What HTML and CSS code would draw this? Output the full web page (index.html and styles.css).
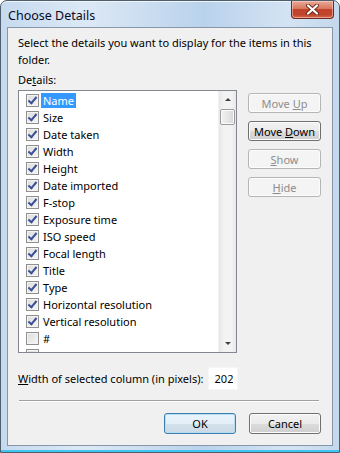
FILE: index.html
```html
<!DOCTYPE html>
<html lang="en">
<head>
    <meta charset="UTF-8">
    <meta name="viewport" content="width=device-width, initial-scale=1.0">
    <title>Choose Details</title>
    <link rel="stylesheet" href="styles.css">
</head>
<body>
    <div class="window">
        <div class="titlebar">
            <span class="title">Choose Details</span>
            <button class="close" title="Close">
                <svg width="15" height="11" viewBox="0 0 15 11">
                    <path d="M3 1.5 L12 9.5 M12 1.5 L3 9.5" stroke="#6b2a1e" stroke-width="4" stroke-linecap="round"/>
                    <path d="M3 1.5 L12 9.5 M12 1.5 L3 9.5" stroke="#ffffff" stroke-width="2.2" stroke-linecap="round"/>
                </svg>
            </button>
        </div>

        <div class="client">
            <p class="intro">Select the details you want to display for the items in this<br>folder.</p>
            <div class="label">De<u>t</u>ails:</div>

            <!-- List of columns and the side buttons -->
            <div class="picker">
                <div class="listbox">
                    <ul class="items">
                        <li><span class="check on"></span><span class="name selected">Name</span></li>
                        <li><span class="check on"></span><span class="name">Size</span></li>
                        <li><span class="check on"></span><span class="name">Date taken</span></li>
                        <li><span class="check on"></span><span class="name">Width</span></li>
                        <li><span class="check on"></span><span class="name">Height</span></li>
                        <li><span class="check on"></span><span class="name">Date imported</span></li>
                        <li><span class="check on"></span><span class="name">F-stop</span></li>
                        <li><span class="check on"></span><span class="name">Exposure time</span></li>
                        <li><span class="check on"></span><span class="name">ISO speed</span></li>
                        <li><span class="check on"></span><span class="name">Focal length</span></li>
                        <li><span class="check on"></span><span class="name">Title</span></li>
                        <li><span class="check on"></span><span class="name">Type</span></li>
                        <li><span class="check on"></span><span class="name">Horizontal resolution</span></li>
                        <li><span class="check on"></span><span class="name">Vertical resolution</span></li>
                        <li><span class="check"></span><span class="name">#</span></li>
                        <li><span class="check"></span></li>
                    </ul>
                    <div class="scrollbar">
                        <div class="arrow up"></div>
                        <div class="thumb"></div>
                        <div class="track"></div>
                        <div class="arrow down"></div>
                    </div>
                </div>
                <div class="side-buttons">
                    <button class="btn" disabled>Move <u>U</u>p</button>
                    <button class="btn">Move <u>D</u>own</button>
                    <button class="btn" disabled><u>S</u>how</button>
                    <button class="btn" disabled><u>H</u>ide</button>
                </div>
            </div>

            <div class="width-row">
                <span><u>W</u>idth of selected column (in pixels):</span>
                <input type="text" class="width-input" value="202">
            </div>

            <div class="separator"></div>

            <div class="actions">
                <button class="btn default">OK</button>
                <button class="btn">Cancel</button>
            </div>
        </div>
    </div>
</body>
</html>
```

FILE: styles.css
```css
body {
    margin: 0;
    font-family: "Noto Sans", "Open Sans", sans-serif;
    font-size: 11px;
    color: #000;
}

.window {
    width: 340px;
    height: 453px;
    box-sizing: border-box;
    display: flex;
    flex-direction: column;
    padding: 0 6px 6px;
    border: 1px solid #4f5d6c;
    border-radius: 7px 7px 0 0;
    background: linear-gradient(to right, #c6daef 0%, #dce8f5 25%, #c9dcf0 45%, #b9d2ec 60%, #d4e3f3 85%, #c3d8ed 100%);
    box-shadow: inset 0 -2px 0 #3fc6f0, inset 0 1px 0 #eef5fb;
}

.titlebar {
    height: 26px;
    display: flex;
    justify-content: space-between;
    align-items: flex-start;
}

.title {
    font-size: 12.5px;
    padding: 6px 0 0 1px;
    color: #0a0a1e;
}

.close {
    width: 43px;
    height: 18px;
    margin-right: -1px;
    padding: 0;
    display: flex;
    justify-content: center;
    align-items: center;
    border: 1px solid #6c2a20;
    border-top: none;
    border-radius: 0 0 4px 4px;
    background: linear-gradient(#e9a999 0%, #d8775f 45%, #c2432a 50%, #c0442c 80%, #d66a4e 100%);
    box-shadow: inset 0 0 0 1px rgba(255, 220, 210, 0.5);
}

.client {
    flex: 1;
    border: 1px solid #8796a8;
    background: #f0f0f0;
    padding: 6px 11px 0 10px;
}

.intro {
    margin: 0;
    line-height: 17px;
}

.label {
    margin-top: 3px;
    line-height: 17px;
}

.picker {
    display: flex;
    gap: 11px;
    margin-top: 2px;
}

.listbox {
    width: 219px;
    height: 263px;
    box-sizing: border-box;
    display: flex;
    border: 1px solid #828790;
    background: #fff;
    overflow: hidden;
}

.items {
    flex: 1;
    list-style: none;
    margin: 0;
    padding: 1px 0 0;
}

.items li {
    height: 17px;
    display: flex;
    align-items: center;
    padding-left: 7px;
}

.check {
    position: relative;
    flex: none;
    width: 13px;
    height: 13px;
    box-sizing: border-box;
    border: 1px solid #8f8f8f;
    background: linear-gradient(135deg, #dcdcdc, #f6f6f6);
    box-shadow: inset 0 0 0 1px #f4f4f4;
}

.check.on::after {
    content: "";
    position: absolute;
    left: 3px;
    top: 0;
    width: 3px;
    height: 7px;
    border-right: 2px solid #3a4f96;
    border-bottom: 2px solid #3a4f96;
    transform: rotate(40deg);
}

.name {
    margin-left: 2px;
    padding: 0 2px;
    line-height: 15px;
}

.name.selected {
    background: #3399ff;
    color: #fff;
}

.scrollbar {
    width: 17px;
    display: flex;
    flex-direction: column;
    background: linear-gradient(to right, #e8e8e8, #f3f3f3 30%, #f3f3f3 70%, #e8e8e8);
    border-left: 1px solid #f0f0f0;
}

.arrow {
    height: 17px;
    display: flex;
    justify-content: center;
    align-items: center;
}

.arrow::before {
    content: "";
    border-left: 3px solid transparent;
    border-right: 3px solid transparent;
}

.arrow.up::before {
    border-bottom: 3px solid #404040;
}

.arrow.down::before {
    border-top: 3px solid #404040;
}

.thumb {
    height: 16px;
    margin: 1px 1px 0;
    box-sizing: border-box;
    border: 1px solid #9b9b9b;
    border-radius: 2px;
    background: linear-gradient(to right, #f2f2f2, #e6e6e6 50%, #d6d6d6);
    box-shadow: inset 0 0 0 1px #fbfbfb;
}

.track {
    flex: 1;
}

.side-buttons {
    display: flex;
    flex-direction: column;
    gap: 8px;
    padding-top: 3px;
}

.btn {
    width: 73px;
    height: 20px;
    padding: 0;
    font-family: inherit;
    font-size: 11px;
    color: #000;
    border: 1px solid #707070;
    border-radius: 3px;
    background: linear-gradient(#f2f2f2 0%, #ebebeb 50%, #dddddd 50%, #cfcfcf 100%);
    box-shadow: inset 0 0 0 1px #fcfcfc;
}

.btn:disabled {
    color: #8d8d8d;
    border-color: #b3b6b9;
    background: #f4f4f4;
}

.btn.default {
    border-color: #3c7fb1;
    background: linear-gradient(#eaf4fb 0%, #e3eef7 50%, #d5e2ec 50%, #c9d9e6 100%);
    box-shadow: inset 0 0 0 1px #b8dcf2;
}

.width-row {
    display: flex;
    align-items: center;
    gap: 5px;
    margin-top: 14px;
}

.width-input {
    width: 30px;
    height: 23px;
    box-sizing: border-box;
    border: 1px solid #f6f6f6;
    background: #fff;
    font-family: inherit;
    font-size: 11px;
    text-align: right;
    padding: 0 4px 0 0;
}

.separator {
    margin: 10px 2px 0 1px;
    border-top: 1px solid #a0a0a0;
    border-bottom: 1px solid #fff;
}

.actions {
    display: flex;
    justify-content: flex-end;
    gap: 13px;
    margin-top: 11px;
}

.actions .btn {
    width: 72px;
    height: 21px;
}
```
